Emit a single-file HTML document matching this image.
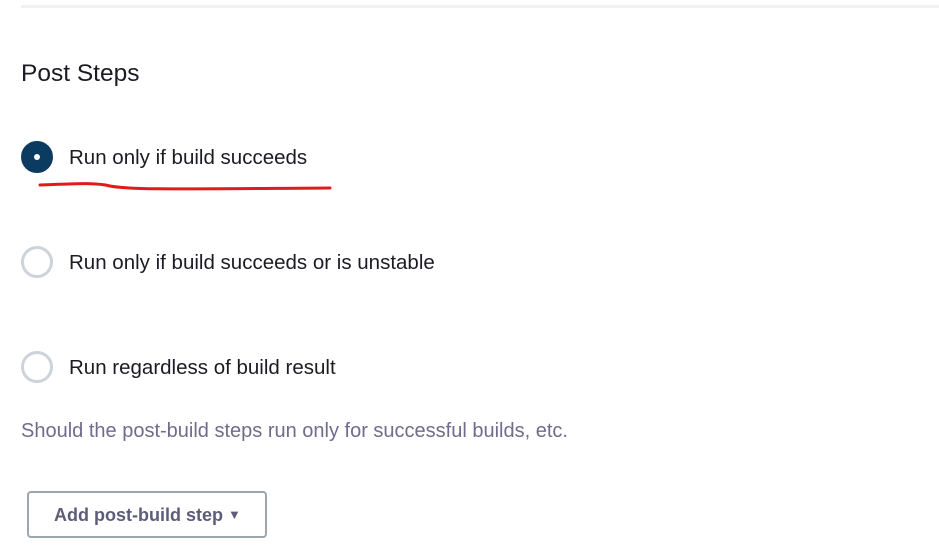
<!DOCTYPE html>
<html><head><style>
body{margin:0;width:939px;height:556px;background:#fff;font-family:"Liberation Sans",sans-serif;position:relative;overflow:hidden}
.a{position:absolute}
.hr{left:21px;top:5px;width:918px;height:3px;background:#f1f1f4}
h2{position:absolute;left:21px;top:60px;margin:0;font-size:24.5px;font-weight:normal;color:#1c1b23}
.r{left:21px;border:3px solid #cdd3da;border-radius:50%;box-sizing:border-box;width:32px;height:32px}
.on{background:#0b3b60;border-color:#0b3b60}
.on:after{content:"";position:absolute;left:10px;top:10px;width:6px;height:6px;background:#fff;border-radius:50%}
.t{left:69px;font-size:20.5px;color:#1c1b23}
.d{left:21px;top:420px;font-size:20px;color:#6f6c8c}
.b{left:27px;top:491px;width:240px;height:47px;box-sizing:border-box;border:2.5px solid #9ba6af;border-radius:4px;font-weight:bold;font-size:18px;color:#5e5c78;line-height:43px;padding-left:25px}
</style></head><body>
<div class="a hr"></div>
<h2>Post Steps</h2>
<div class="a r on" style="top:141px"></div>
<div class="a t" style="top:146px">Run only if build succeeds</div>
<svg class="a" style="left:0;top:0" width="939" height="556"><path d="M40 185 C70 184 95 182 110 186 C130 190 180 189 330 188" stroke="#e01b1b" stroke-width="3" fill="none" stroke-linecap="round"/></svg>
<div class="a r" style="top:246px"></div>
<div class="a t" style="top:251px">Run only if build succeeds or is unstable</div>
<div class="a r" style="top:351px"></div>
<div class="a t" style="top:356px">Run regardless of build result</div>
<div class="a d">Should the post-build steps run only for successful builds, etc.</div>
<div class="a b">Add post-build step <span style="font-size:13px;vertical-align:2px">&#9660;</span></div>
</body></html>
